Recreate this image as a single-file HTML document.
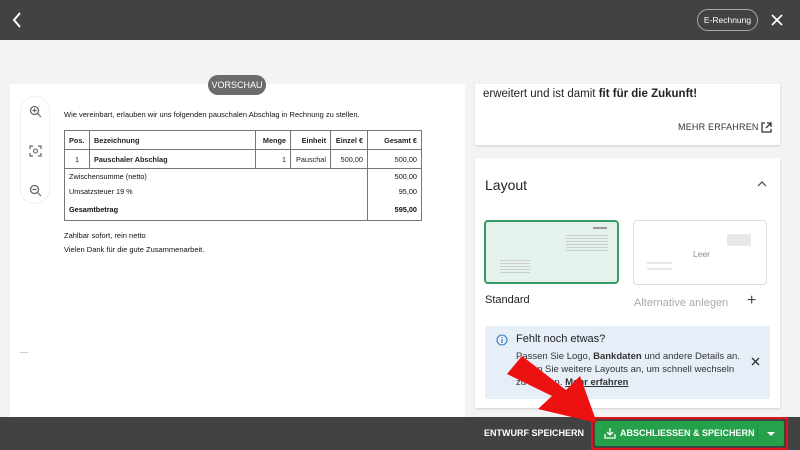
<!DOCTYPE html>
<html><head><meta charset="utf-8"><style>
*{box-sizing:border-box;margin:0;padding:0}
body{width:800px;height:450px;overflow:hidden;background:#f3f3f3;font-family:"Liberation Sans",sans-serif;position:relative;color:#222}
.hdr{position:absolute;left:0;top:0;width:800px;height:40px;background:#424242}
.doc{position:absolute;left:10px;top:84px;width:455px;height:333px;background:#fff}
.pill{position:absolute;left:208px;top:75px;width:58px;height:20px;border-radius:10px;background:#6b6b6b;color:#fff;font-size:9px;line-height:20px;text-align:center}
.zoom{position:absolute;left:20px;top:96px;width:30px;height:108px;border-radius:15px;background:#fff;border:1px solid #f0f0f0}
.d{position:absolute;font-size:7.5px;color:#111}
table{position:absolute;left:64px;top:130px;width:358px;border-collapse:collapse;font-size:7.3px;line-height:9px}
td{border:1px solid #777;height:19px;padding:0 4px}
.tot{position:absolute;left:64px;top:168px;width:358px;height:53px;border:1px solid #777;border-top:none;font-size:7.3px;color:#111}
.tot div{position:absolute;line-height:9px}
.card{position:absolute;background:#fff;box-shadow:0 1px 2px rgba(0,0,0,.15)}
.bar{position:absolute;left:0;top:417px;width:800px;height:33px;background:#424242}
</style></head><body>
<div class="hdr">
<svg style="position:absolute;left:10px;top:11px" width="14" height="18"><path d="M10 2 L4 9 L10 16" stroke="#fff" stroke-width="2" fill="none"/></svg>
<div style="position:absolute;left:697px;top:9px;width:61px;height:22px;border:1px solid #aaa;border-radius:11px;color:#fff;font-size:8.5px;line-height:20px;text-align:center">E-Rechnung</div>
<svg style="position:absolute;left:771px;top:14px" width="12" height="12"><path d="M1 1L11 11M11 1L1 11" stroke="#fff" stroke-width="1.8"/></svg>
</div>
<div class="doc"></div>
<div class="pill">VORSCHAU</div>
<div class="zoom">
<svg style="position:absolute;left:8px;top:8px" width="13" height="13"><circle cx="5.5" cy="5.5" r="4" stroke="#666" fill="none" stroke-width="1.3"/><path d="M8.5 8.5L12 12M3.5 5.5h4M5.5 3.5v4" stroke="#666" stroke-width="1.2"/></svg>
<svg style="position:absolute;left:8px;top:48px" width="13" height="12"><path d="M1 4V1h3M9 1h3v3M12 8v3H9M4 11H1V8" stroke="#666" fill="none" stroke-width="1.2"/><circle cx="6.5" cy="6" r="2" stroke="#666" fill="none" stroke-width="1.1"/></svg>
<svg style="position:absolute;left:8px;top:87px" width="13" height="13"><circle cx="5.5" cy="5.5" r="4" stroke="#666" fill="none" stroke-width="1.3"/><path d="M8.5 8.5L12 12M3.5 5.5h4" stroke="#666" stroke-width="1.2"/></svg>
</div>
<div class="d" style="left:64px;top:110px">Wie vereinbart, erlauben wir uns folgenden pauschalen Abschlag in Rechnung zu stellen.</div>
<table>
<tr style="font-weight:bold"><td style="width:25px">Pos.</td><td>Bezeichnung</td><td style="width:35px;text-align:right">Menge</td><td style="width:40px;text-align:right">Einheit</td><td style="width:37px;text-align:right">Einzel €</td><td style="width:54px;text-align:right">Gesamt €</td></tr>
<tr><td style="text-align:center">1</td><td style="font-weight:bold">Pauschaler Abschlag</td><td style="text-align:right">1</td><td style="text-align:right">Pauschal</td><td style="text-align:right">500,00</td><td style="text-align:right">500,00</td></tr>
</table>
<div class="tot">
<div style="left:302px;top:0;width:1px;height:52px;background:#777"></div>
<div style="left:4px;top:4px">Zwischensumme (netto)</div><div style="right:4px;top:4px">500,00</div>
<div style="left:4px;top:19px">Umsatzsteuer 19 %</div><div style="right:4px;top:19px">95,00</div>
<div style="left:4px;top:37px;font-weight:bold">Gesamtbetrag</div><div style="right:4px;top:37px;font-weight:bold">595,00</div>
</div>
<div class="d" style="left:64px;top:231px">Zahlbar sofort, rein netto</div>
<div class="d" style="left:64px;top:245px">Vielen Dank für die gute Zusammenarbeit.</div>
<div style="position:absolute;left:20px;top:352px;width:8px;height:1px;background:#ccc"></div>

<div class="card" style="left:475px;top:84px;width:305px;height:61px">
<div style="position:absolute;left:8px;top:4px;font-size:11.5px;color:#222">erweitert und ist damit <b>fit für die Zukunft!</b></div>
<div style="position:absolute;left:203px;top:38px;font-size:9px;letter-spacing:.2px;color:#333">MEHR ERFAHREN</div>
<svg style="position:absolute;left:286px;top:38px" width="11" height="11"><path d="M4 1H1v9h9V7M6 1h4v4M10 1L5 6" stroke="#333" fill="none" stroke-width="1.3"/></svg>
</div>
<div class="card" style="left:475px;top:158px;width:305px;height:250px">
<div style="position:absolute;left:10px;top:19px;font-size:14px;color:#222">Layout</div>
<svg style="position:absolute;left:282px;top:22px" width="10" height="7"><path d="M1 6L5 2L9 6" stroke="#444" fill="none" stroke-width="1.2"/></svg>
<div style="position:absolute;left:9px;top:62px;width:135px;height:64px;border:2px solid #3a9a67;border-radius:4px;background:#e3f3ec">
<div style="position:absolute;left:107px;top:5px;width:14px;height:2px;background:#999"></div>
<div style="position:absolute;left:80px;top:11px;width:42px;height:20px;background:repeating-linear-gradient(#e3f3ec 0 2px,#ccc 2px 3px)"></div>
<div style="position:absolute;left:14px;top:36px;width:30px;height:15px;background:repeating-linear-gradient(#e3f3ec 0 2px,#ccc 2px 3px)"></div>
</div>
<div style="position:absolute;left:158px;top:62px;width:134px;height:65px;border:1px solid #ddd;border-radius:4px;background:#fff">
<div style="position:absolute;left:93px;top:13px;width:24px;height:12px;background:#e8e8e8;border-radius:2px"></div>
<div style="position:absolute;left:59px;top:28px;font-size:8.5px;color:#888">Leer</div>
<div style="position:absolute;left:13px;top:41px;width:25px;height:2px;background:#e6e6e6"></div>
<div style="position:absolute;left:13px;top:47px;width:25px;height:2px;background:#e6e6e6"></div>
</div>
<div style="position:absolute;left:10px;top:136px;font-size:11px;color:#222">Standard</div>
<div style="position:absolute;left:159px;top:139px;font-size:11px;color:#aaa">Alternative anlegen</div>
<div style="position:absolute;left:272px;top:134px;font-size:16px;color:#444">+</div>
<div style="position:absolute;left:10px;top:168px;width:285px;height:73px;background:#e6eff8;border-radius:2px">
<svg style="position:absolute;left:11px;top:8px" width="12" height="12"><circle cx="6" cy="6" r="5" stroke="#3a7cc4" fill="none" stroke-width="1.1"/><path d="M6 5v4M6 3v1" stroke="#3a7cc4" stroke-width="1.2"/></svg>
<div style="position:absolute;left:31px;top:7px;font-size:11px;color:#222">Fehlt noch etwas?</div>
<div style="position:absolute;left:31px;top:24px;font-size:9.5px;line-height:13px;color:#333;width:230px">Passen Sie Logo, <b>Bankdaten</b> und andere Details an. Legen Sie weitere Layouts an, um schnell wechseln zu können. <b style="text-decoration:underline">Mehr erfahren</b></div>
<svg style="position:absolute;left:266px;top:31px" width="9" height="9"><path d="M1 1L8 8M8 1L1 8" stroke="#333" stroke-width="1.4"/></svg>
</div>
</div>

<div class="bar">
<div style="position:absolute;left:484px;top:11px;font-size:9px;font-weight:bold;color:#fff">ENTWURF SPEICHERN</div>
<div style="position:absolute;left:595px;top:4px;width:189px;height:25px;background:#25a04b;border-radius:2px">
<svg style="position:absolute;left:9px;top:6px" width="12" height="12"><path d="M1 7v4h10V7M6 1v7M3 5l3 3 3-3" stroke="#fff" fill="none" stroke-width="1.3"/></svg>
<div style="position:absolute;left:25px;top:7px;font-size:9px;font-weight:bold;color:#fff">ABSCHLIESSEN &amp; SPEICHERN</div>
<div style="position:absolute;left:162px;top:4px;width:1px;height:17px;background:#1c8a3e"></div>
<svg style="position:absolute;left:172px;top:11px" width="8" height="5"><path d="M0 0h8L4 4z" fill="#fff"/></svg>
</div>
<div style="position:absolute;left:591px;top:0;width:197px;height:33px;border:2px solid #e0151b"></div>
</div>
<svg style="position:absolute;left:0;top:0" width="800" height="450"><polygon points="507,374 522,356 566,390 580,376 597,423 538,409 552,396" fill="#ee1111"/></svg>
</body></html>
